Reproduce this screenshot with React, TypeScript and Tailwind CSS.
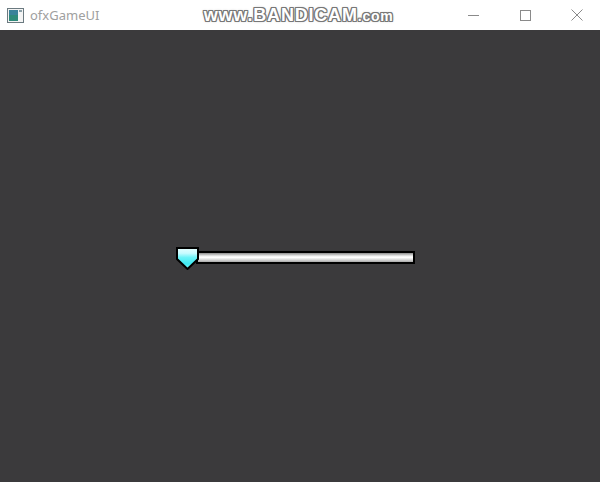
import React from "react";

function AppIcon() {
  return (
    <svg width="17" height="15" viewBox="0 0 17 15" className="block">
      <rect x="0.5" y="0.5" width="16" height="14" fill="#f4f4f4" stroke="#6b7a80" />
      <rect x="2" y="2" width="9" height="11" fill="#2f8a7a" />
      <rect x="2" y="2" width="9" height="5" fill="#3f7fa8" opacity="0.7" />
      <rect x="12" y="2" width="3" height="2" fill="#8aa0a8" />
    </svg>
  );
}

function Thumb() {
  return (
    <svg width="23" height="23" viewBox="0 0 23 23" className="block">
      <defs>
        <linearGradient id="cy" x1="0" y1="0" x2="0" y2="1">
          <stop offset="0" stopColor="#e6ffff" />
          <stop offset="0.25" stopColor="#c8fbff" />
          <stop offset="0.45" stopColor="#6ef3f8" />
          <stop offset="0.75" stopColor="#3ee9f2" />
          <stop offset="1" stopColor="#7ef5fa" />
        </linearGradient>
      </defs>
      <path d="M1 1 H22 V12 L11.5 22 L1 12 Z" fill="url(#cy)" stroke="#000" strokeWidth="2" strokeLinejoin="miter" />
    </svg>
  );
}

export default function App() {
  return (
    <div className="w-[600px] h-[482px] flex flex-col overflow-hidden" style={{ fontFamily: '"Segoe UI", "Noto Sans", "Liberation Sans", sans-serif' }}>
      <div className="h-[30px] bg-white flex items-center relative shrink-0">
        <div className="pl-[7px] pr-[6px]">
          <AppIcon />
        </div>
        <span className="text-[13px] text-[#a0a0a0] leading-none" style={{ fontFamily: '"Noto Sans", "Liberation Sans", sans-serif' }}>ofxGameUI</span>
        <div className="flex-1 flex justify-center pl-[48px]">
          <span
            className="text-[18px] font-bold text-white tracking-[0.8px] leading-none"
            style={{
              fontFamily: '"Liberation Sans", "DejaVu Sans", sans-serif',
              textShadow:
                "1px 0 0 #777, -1px 0 0 #777, 0 1px 0 #777, 0 -1px 0 #777, 1px 1px 0 #777, -1px -1px 0 #777, 1px -1px 0 #777, -1px 1px 0 #777, 0 0 3px #999",
            }}
          >
            www.BANDICAM<span className="text-[14px]">.com</span>
          </span>
        </div>
        <div className="flex h-full">
          <div className="w-[46px] h-full flex items-center justify-center">
            <div className="w-[11px] h-px bg-[#8a8a8a]" />
          </div>
          <div className="w-[58px] h-full flex items-center justify-center">
            <div className="w-[11px] h-[11px] border border-[#8a8a8a]" />
          </div>
          <div className="w-[46px] h-full flex items-center justify-center">
            <svg width="12" height="12" viewBox="0 0 12 12">
              <path d="M0.5 0.5 L11.5 11.5 M11.5 0.5 L0.5 11.5" stroke="#8a8a8a" strokeWidth="1" />
            </svg>
          </div>
        </div>
      </div>
      <div className="flex-1 bg-[#3b3a3c] pt-[217px] pl-[176px]">
        <div className="flex items-start">
          <div className="relative z-10">
            <Thumb />
          </div>
          <div className="-ml-[3px] mt-[4px] w-[219px] h-[13px] bg-black p-[2px]">
            <div className="w-full h-full bg-[linear-gradient(to_bottom,#8c8c8c_0%,#f2f2f2_35%,#ffffff_50%,#d8d8d8_75%,#a8a8a8_100%)]" />
          </div>
        </div>
      </div>
    </div>
  );
}
